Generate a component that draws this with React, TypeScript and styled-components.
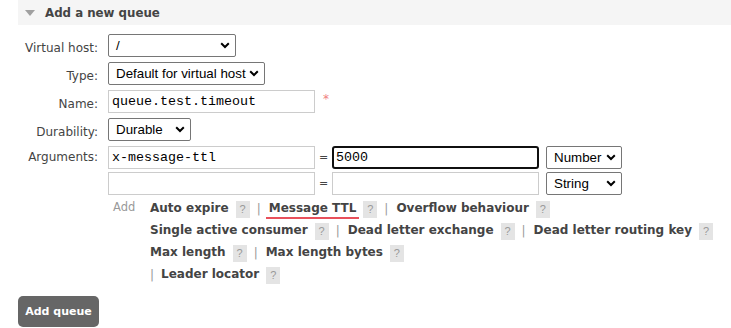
import React from "react";
import styled, { createGlobalStyle } from "styled-components";

const Global = createGlobalStyle`
  html, body { margin: 0; padding: 0; background: #fff; }
  body { font-family: "DejaVu Sans", Verdana, sans-serif; color: #484848; }
`;

const Page = styled.div`
  padding-left: 18px;
  width: 713px;
`;

const Header = styled.div`
  height: 25px;
  background: #f5f5f5;
  display: flex;
  align-items: center;
  gap: 10px;
  padding-left: 7px;
  font-weight: bold;
  font-size: 11.8px;
  color: #444;
`;

const Triangle = styled.span`
  width: 0;
  height: 0;
  border-left: 5px solid transparent;
  border-right: 5px solid transparent;
  border-top: 6px solid #a0a0a0;
  margin-top: 1px;
`;

const Form = styled.div`
  display: grid;
  grid-template-columns: 80px 1fr;
  column-gap: 10px;
  margin-top: 9px;
  align-items: center;
`;

const Label = styled.div<{ $top?: boolean }>`
  text-align: right;
  font-size: 12px;
  color: #444;
  align-self: ${(p) => (p.$top ? "start" : "center")};
  padding-top: ${(p) => (p.$top ? "4px" : "0")};
`;

const Field = styled.div<{ $mb?: number }>`
  display: flex;
  align-items: center;
  margin-bottom: ${(p) => p.$mb ?? 5}px;
`;

const Select = styled.div<{ $w: number }>`
  box-sizing: border-box;
  width: ${(p) => p.$w}px;
  height: 23px;
  border: 1px solid #767676;
  border-radius: 2px;
  display: flex;
  align-items: center;
  justify-content: space-between;
  padding: 0 5px 0 7px;
  font-family: "Liberation Sans", Arial, sans-serif;
  font-size: 13.33px;
  color: #000;
  background: #fff;
`;

const Chevron = () => (
  <svg width="10" height="7" viewBox="0 0 10 7">
    <path d="M1.2 1.3 L5 5 L8.8 1.3" fill="none" stroke="#000" strokeWidth="2" />
  </svg>
);

const Input = styled.div<{ $w: number; $focus?: boolean }>`
  box-sizing: border-box;
  width: ${(p) => p.$w}px;
  height: 23px;
  border: ${(p) => (p.$focus ? "2px solid #101010" : "1px solid #ccc")};
  border-radius: ${(p) => (p.$focus ? "3px" : "0")};
  padding: 0 ${(p) => (p.$focus ? "2px" : "3px")};
  display: flex;
  align-items: center;
  font-family: "Liberation Mono", "Courier New", monospace;
  font-size: 13.33px;
  color: #000;
`;

const Star = styled.span`
  color: #f08080;
  font-size: 12px;
  margin-left: 8px;
  align-self: flex-start;
  margin-top: 2px;
`;

const Eq = styled.span`
  width: 17px;
  text-align: center;
  font-size: 11px;
  color: #444;
`;

const ArgRow = styled.div`
  display: flex;
  align-items: center;
  margin-bottom: 3px;
`;

const ArgSelect = styled(Select)`
  margin-left: 7px;
`;

const AddBlock = styled.div`
  display: flex;
  margin-left: 95px;
  margin-top: 0px;
`;

const AddWord = styled.div`
  font-size: 11.5px;
  color: #999;
  width: 37px;
  padding-top: 2px;
`;

const Lines = styled.div`
  display: flex;
  flex-direction: column;
`;

const Line = styled.div`
  display: flex;
  align-items: center;
  height: 22px;
  white-space: nowrap;
`;

const Opt = styled.span<{ $active?: boolean }>`
  font-weight: bold;
  font-size: 12px;
  color: #444;
  padding: 0 3px 2px;
  margin: 2px -3px 0;
  border-bottom: 2px solid ${(p) => (p.$active ? "#e8505b" : "transparent")};
`;

const Help = styled.span`
  display: inline-flex;
  align-items: center;
  justify-content: center;
  width: 14px;
  height: 17px;
  background: #e4e4e4;
  color: #999;
  font-family: "Liberation Sans", Arial, sans-serif;
  font-size: 11px;
  margin-left: 7px;
`;

const Sep = styled.span`
  color: #999;
  font-size: 12px;
  margin: 0 8px 0 7px;
`;

const LeadSep = styled(Sep)`
  margin: 0 7px 0 0;
`;

const Button = styled.button`
  margin-top: 10px;
  width: 81px;
  height: 31px;
  border: none;
  border-radius: 5px;
  background: #666;
  color: #fff;
  font-family: "DejaVu Sans", Verdana, sans-serif;
  font-weight: bold;
  font-size: 11px;
  padding: 0;
`;

const Item = ({ label, active, last }: { label: string; active?: boolean; last?: boolean }) => (
  <>
    <Opt $active={active}>{label}</Opt>
    <Help>?</Help>
    {!last && <Sep>|</Sep>}
  </>
);

export default function App() {
  return (
    <>
      <Global />
      <Page>
        <Header>
          <Triangle />
          <span>Add a new queue</span>
        </Header>
        <Form>
          <Label>Virtual host:</Label>
          <Field>
            <Select $w={128}>
              <span>/</span>
              <Chevron />
            </Select>
          </Field>
          <Label>Type:</Label>
          <Field>
            <Select $w={157}>
              <span>Default for virtual host</span>
              <Chevron />
            </Select>
          </Field>
          <Label>Name:</Label>
          <Field>
            <Input $w={207}>queue.test.timeout</Input>
            <Star>*</Star>
          </Field>
          <Label>Durability:</Label>
          <Field>
            <Select $w={83}>
              <span>Durable</span>
              <Chevron />
            </Select>
          </Field>
          <Label $top>Arguments:</Label>
          <Field $mb={0}>
            <div>
              <ArgRow>
                <Input $w={207}>x-message-ttl</Input>
                <Eq>=</Eq>
                <Input $w={207} $focus>5000</Input>
                <ArgSelect $w={76}>
                  <span>Number</span>
                  <Chevron />
                </ArgSelect>
              </ArgRow>
              <ArgRow>
                <Input $w={207}></Input>
                <Eq>=</Eq>
                <Input $w={207}></Input>
                <ArgSelect $w={76}>
                  <span>String</span>
                  <Chevron />
                </ArgSelect>
              </ArgRow>
            </div>
          </Field>
        </Form>
        <AddBlock>
          <AddWord>Add</AddWord>
          <Lines>
            <Line>
              <Item label="Auto expire" />
              <Item label="Message TTL" active />
              <Item label="Overflow behaviour" last />
            </Line>
            <Line>
              <Item label="Single active consumer" />
              <Item label="Dead letter exchange" />
              <Item label="Dead letter routing key" last />
            </Line>
            <Line>
              <Item label="Max length" />
              <Item label="Max length bytes" last />
            </Line>
            <Line>
              <LeadSep>|</LeadSep>
              <Opt>Leader locator</Opt>
              <Help>?</Help>
            </Line>
          </Lines>
        </AddBlock>
        <Button>Add queue</Button>
      </Page>
    </>
  );
}
